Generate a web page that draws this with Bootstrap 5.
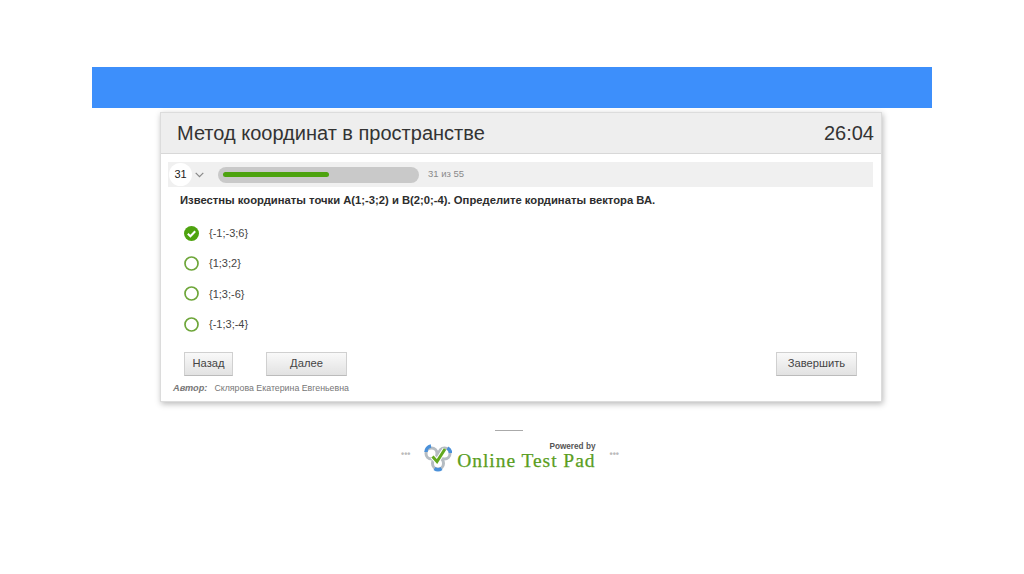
<!DOCTYPE html>
<html lang="ru">
<head>
<meta charset="utf-8">
<title>Метод координат в пространстве</title>
<link href="https://cdn.jsdelivr.net/npm/bootstrap@5.3.0/dist/css/bootstrap.min.css" rel="stylesheet">
<style>
html,body{height:574px;overflow:hidden}
body{background:#fff;font-family:"Liberation Sans",Arial,sans-serif;padding-top:67px;color:#333}
.slide-band{width:840px;height:41px;margin-left:92px;background:#3d8ffb}
.test-panel{width:722px;height:290px;margin:4px 0 0 160px;background:#fff;border:1px solid #dcdcdc;box-shadow:1px 2px 6px rgba(0,0,0,.28)}
.test-head{height:41px;background:#eee;border-bottom:1px solid #d8d8d8;padding:0 7px 0 16px;font-size:20px;color:#333}
.test-time{font-size:20px}
.test-body{padding:8px 8px 0 7px}
.prog-row{height:25px;background:#f0f0f0;gap:0}
.num-bubble{width:23px;height:23px;border-radius:50%;background:#fff;font-size:11px;color:#222;margin-left:1px}
.chev{margin-left:3px;margin-right:14px}
.prog-track{width:201px;height:16px;border-radius:8px;background:#c9c9c9;padding:0 5px}
.prog-fill{height:5px;width:106px;border-radius:3px;background:#4da30f}
.prog-label{font-size:9.5px;color:#8a8a8a;margin-left:9px}
.q-text{font-size:11.25px;font-weight:700;color:#2d2d2d;margin:6px 0 0 12px;height:20px;line-height:15px}
.ans-list{margin:5px 0 0 16px;gap:0}
.ans-row{height:30.4px;gap:10px;font-size:11px;color:#444}
.ans-ring{width:15px;height:15px;flex:none}
.btn-row{margin:12px 16px 0 16px}
.gbtn{height:24px;border:1px solid #d0d0d0;border-bottom-color:#bbb;border-radius:0;background:linear-gradient(#f9f9f9,#e2e2e2);font-size:11.2px;color:#444;padding:0;display:flex;align-items:center;justify-content:center}
.gbtn-a{width:49px}
.gbtn-b{width:81px;margin-left:33px}
.gbtn-c{width:81px}
.author-row{font-size:8.8px;color:#777;margin:6px 0 0 5px;gap:7px}
.author-row em{font-weight:700;font-size:9.2px;color:#777}
.foot-rule{width:28px;height:1px;background:#aaa;margin:28px 0 0 495px}
.foot-row{margin:13px 0 0 401px;width:218px;height:28px}
.foot-dots{font-size:9px;line-height:1;color:#bbb;font-weight:700;letter-spacing:0;margin-top:-7px}
.foot-brand{width:172px;margin-left:14px}
.foot-logo{width:28px;height:28px;flex:none}
.foot-text{text-align:right;flex:1;margin-right:1px}
.foot-by{font-size:8.2px;font-weight:700;color:#555;line-height:8px;margin-top:-3px}
.foot-name{font-family:"Liberation Serif",serif;font-size:19.5px;line-height:19px;color:#5a9e1e;letter-spacing:.95px;white-space:nowrap;-webkit-text-stroke:.25px #5a9e1e}
</style>
</head>
<body>
<div class="slide-band"></div>
<div class="test-panel">
  <div class="test-head d-flex align-items-center justify-content-between">
    <span>Метод координат в пространстве</span>
    <span class="test-time">26:04</span>
  </div>
  <div class="test-body">
    <div class="prog-row d-flex align-items-center">
      <div class="num-bubble d-flex align-items-center justify-content-center">31</div>
      <svg class="chev" width="9" height="6" viewBox="0 0 9 6"><path d="M.7.8l3.800 3.800L8.300.8" fill="none" stroke="#888" stroke-width="1.200"/></svg>
      <div class="prog-track d-flex align-items-center"><div class="prog-fill"></div></div>
      <div class="prog-label">31 из 55</div>
    </div>
    <div class="q-text">Известны координаты точки А(1;-3;2) и В(2;0;-4). Определите кординаты вектора ВА.</div>
    <div class="ans-list d-flex flex-column">
      <div class="ans-row d-flex align-items-center">
        <svg class="ans-ring" viewBox="0 0 15 15"><circle cx="7.500" cy="7.500" r="7.500" fill="#4ea30f"/><path d="M3.800 7.800l2.600 2.500 4.800-5" fill="none" stroke="#fff" stroke-width="2"/></svg>
        <span>{-1;-3;6}</span>
      </div>
      <div class="ans-row d-flex align-items-center">
        <svg class="ans-ring" viewBox="0 0 15 15"><circle cx="7.500" cy="7.500" r="6.500" fill="none" stroke="#6ea63a" stroke-width="1.700"/></svg>
        <span>{1;3;2}</span>
      </div>
      <div class="ans-row d-flex align-items-center">
        <svg class="ans-ring" viewBox="0 0 15 15"><circle cx="7.500" cy="7.500" r="6.500" fill="none" stroke="#6ea63a" stroke-width="1.700"/></svg>
        <span>{1;3;-6}</span>
      </div>
      <div class="ans-row d-flex align-items-center">
        <svg class="ans-ring" viewBox="0 0 15 15"><circle cx="7.500" cy="7.500" r="6.500" fill="none" stroke="#6ea63a" stroke-width="1.700"/></svg>
        <span>{-1;3;-4}</span>
      </div>
    </div>
    <div class="btn-row d-flex">
      <button type="button" class="gbtn gbtn-a">Назад</button>
      <button type="button" class="gbtn gbtn-b">Далее</button>
      <button type="button" class="gbtn gbtn-c ms-auto">Завершить</button>
    </div>
    <div class="author-row d-flex align-items-center"><em>Автор:</em><span>Склярова Екатерина Евгеньевна</span></div>
  </div>
</div>
<div class="foot-rule"></div>
<div class="foot-row d-flex align-items-center">
  <span class="foot-dots">•••</span>
  <div class="foot-brand d-flex align-items-center">
    <svg class="foot-logo" viewBox="0 0 28 28">
      <circle cx="7.500" cy="9.500" r="5.500" fill="none" stroke="#b5bcc2" stroke-width="3"/>
      <circle cx="20.500" cy="9.500" r="5.500" fill="none" stroke="#b5bcc2" stroke-width="3"/>
      <circle cx="14" cy="19.500" r="5.500" fill="none" stroke="#b5bcc2" stroke-width="3"/>
      <path d="M2 8a6 6 0 0 1 5-6" fill="none" stroke="#4a90d9" stroke-width="3.500"/>
      <path d="M26.500 9a6 6 0 0 0-3-5" fill="none" stroke="#4a90d9" stroke-width="3.500"/>
      <path d="M10.500 24.500a6 6 0 0 0 7 0" fill="none" stroke="#4a90d9" stroke-width="3.500"/>
      <path d="M8.500 12.500l4.500 5L21 5" fill="none" stroke="#fff" stroke-width="5"/>
      <path d="M8.500 12.500l4.500 5L21 5" fill="none" stroke="#62a81f" stroke-width="3"/>
    </svg>
    <div class="foot-text">
      <div class="foot-by">Powered by</div>
      <div class="foot-name">Online Test Pad</div>
    </div>
  </div>
  <span class="foot-dots ms-auto">•••</span>
</div>
<script src="https://cdn.jsdelivr.net/npm/bootstrap@5.3.0/dist/js/bootstrap.bundle.min.js"></script>
</body>
</html>
